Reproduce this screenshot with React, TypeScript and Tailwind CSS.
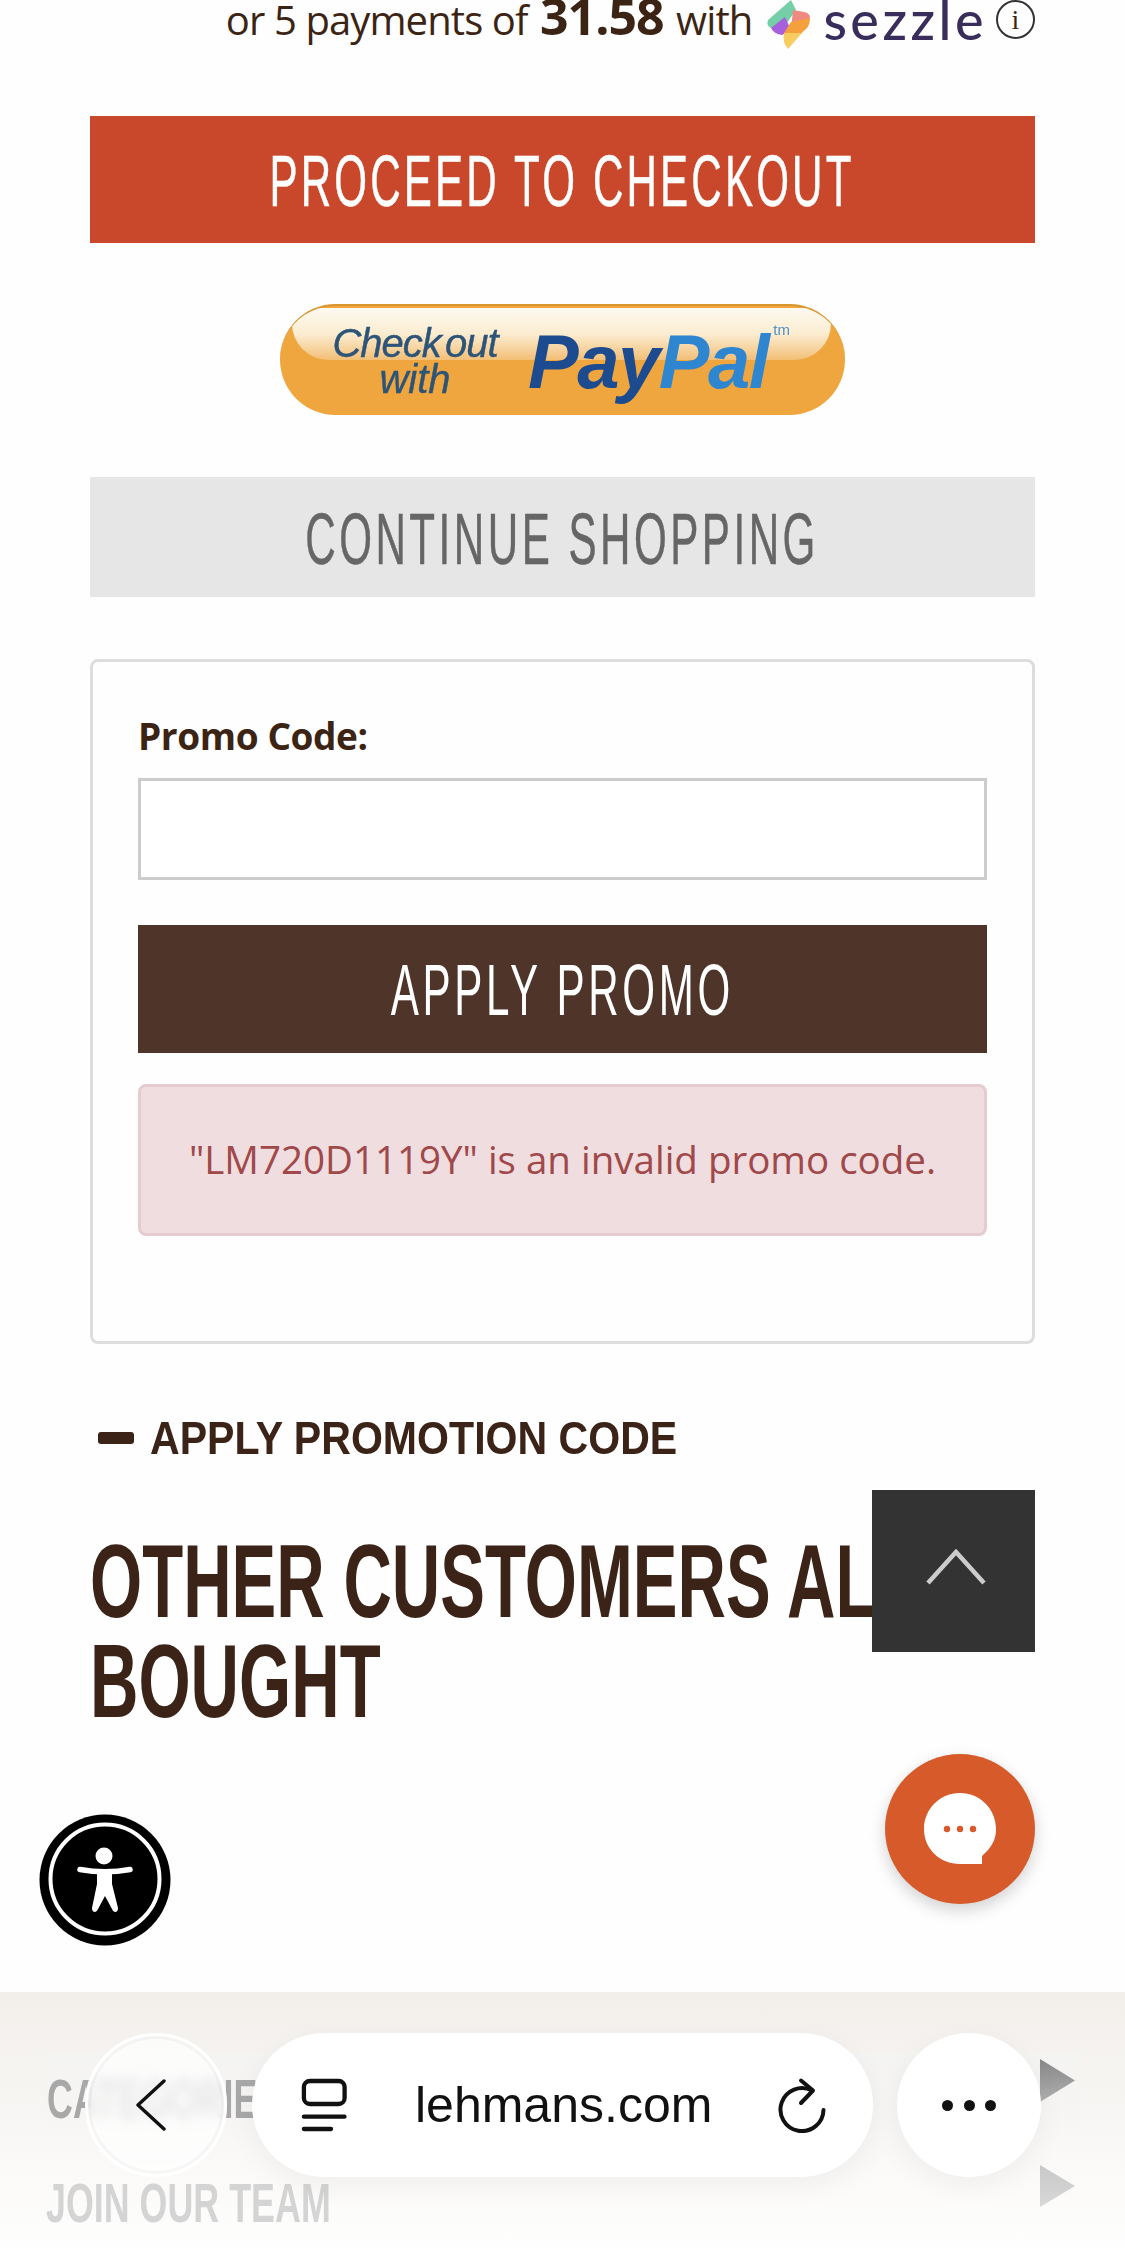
const narrow = "font-['Liberation_Sans',sans-serif]";
const body = "font-['Open_Sans','Noto_Sans',sans-serif]";

const SezzleMark = () => (
  <svg width="44" height="50" viewBox="0 0 44 50" className="shrink-0">
    <path d="M25 0 L2 20 Q0 26 5 28 L16 30 L30 10 Z" fill="#74cfa8" />
    <path d="M27 10 L38 12 Q44 13 44 18 L25 30 Z" fill="#ef8a80" />
    <path d="M5 28 L19 17 L25 30 L16 35 Q8 34 5 28 Z" fill="#a75fdc" />
    <path d="M44 18 Q44 24 41 28 L30 38 L18 33 L25 22 Z" fill="#f5a03c" />
    <path d="M18 33 L36 33 L22 49 Q16 42 18 33 Z" fill="#f8cd5f" />
  </svg>
);

const PayPalButton = () => (
  <div className="relative mx-auto mt-[61px] flex h-[111px] w-[565px] items-center overflow-hidden rounded-[56px] border-t-2 border-[#d9962f] bg-[#efa63f] pl-[50px] blur-[0.6px]">
    <div className="absolute left-[12px] right-[14px] top-[2px] h-[52px] rounded-b-[70px] rounded-t-[30px] bg-gradient-to-b from-[#fdf9f0] via-[#fbecd0] to-[#f3bf75]" />
    <div className="relative w-[170px] text-center font-['Liberation_Sans',sans-serif] text-[40px] italic leading-[36px] text-[#2c5478] [-webkit-text-stroke:0.4px_#2c5478]">
      <div className="tracking-[-1px] [word-spacing:-6px]">Check out</div>
      <div>with</div>
    </div>
    <div className="relative ml-[28px] mt-[2px] font-['Liberation_Sans',sans-serif] text-[76px] font-bold italic leading-none tracking-[-1.5px] text-[#1d4b8f]">
      Pay<span className="text-[#2f86d0]">Pal</span>
    </div>
    <span className="relative mb-[60px] ml-[5px] font-['Liberation_Sans',sans-serif] text-[15px] text-[#4f91c9]">tm</span>
  </div>
);

const Accessibility = () => (
  <svg width="132" height="132" viewBox="0 0 132 132">
    <circle cx="66" cy="66" r="65.5" fill="#000" />
    <circle cx="66" cy="65" r="54.5" fill="none" stroke="#fff" strokeWidth="4" />
    <circle cx="65" cy="42" r="8.5" fill="#fff" />
    <path d="M41 55.5 Q66 60 91 55.5" fill="none" stroke="#fff" strokeWidth="5.5" strokeLinecap="round" />
    <path d="M58 58 H73 V70 L79 94 Q79 98 76 98 Q74 98 73 95 L66 82 L59 95 Q58 98 56 98 Q53 98 53 94 L58 70 Z" fill="#fff" />
  </svg>
);

const ChatBubble = () => (
  <svg width="74" height="74" viewBox="0 0 74 74">
    <path d="M37 1 C57 1 73 17 73 37 C73 46 70 52 65 58 L59 64 L59 72 L37 72 C17 72 1 57 1 37 C1 17 17 1 37 1 Z" fill="#fff" />
    <circle cx="24" cy="37" r="3.2" fill="#d75a2b" />
    <circle cx="37" cy="37" r="3.2" fill="#d75a2b" />
    <circle cx="50" cy="37" r="3.2" fill="#d75a2b" />
  </svg>
);

const TabIcon = () => (
  <svg width="48" height="56" viewBox="0 0 48 56" fill="none" stroke="#111" strokeWidth="4.3" strokeLinecap="round" className="shrink-0">
    <rect x="3.9" y="4" width="40.7" height="23" rx="6" />
    <path d="M3.9 39.7 H44.5 M3.9 52 H31" />
  </svg>
);

const ReloadIcon = () => (
  <svg width="50" height="56" viewBox="0 0 50 56" fill="none" stroke="#111" strokeWidth="4" strokeLinecap="round" strokeLinejoin="round" className="shrink-0">
    <path d="M36 13.5 A21.5 21.5 0 1 0 47.5 33" />
    <path d="M25 3.5 L37 13.5 L25 26" />
  </svg>
);

export default function App() {
  return (
    <div className="relative h-[2261px] w-[1125px] overflow-hidden bg-[#fefefe]">
      <div className="px-[90px]">
        <div className="relative flex h-[55px] items-start justify-end text-[#3c2415]">
          <span className={`mt-[-8px] whitespace-nowrap text-[40px] leading-[48px] tracking-[-0.9px] ${body}`}>
            or 5 payments of <b className="mx-[3px] text-[50px] tracking-[-1px]">31.58</b> with
          </span>
          <span className="ml-[14px]"><SezzleMark /></span>
          <span className="ml-[13px] mt-[-8px] font-['Lato',sans-serif] text-[54px] font-medium leading-[56px] tracking-[3.5px] text-[#392d5c]">sezzle</span>
          <span className="ml-[9px] flex h-[39px] w-[39px] items-center justify-center rounded-full border-2 border-[#333] font-['Liberation_Serif',serif] text-[28px] leading-none">i</span>
        </div>

        <button className={`mt-[61px] flex h-[127px] w-full items-center justify-center bg-[#c9482b] pt-[3px] text-[72px] tracking-[5.4px] text-white ${narrow}`}>
          <span className="inline-block scale-x-[0.585] whitespace-nowrap [-webkit-text-stroke:0.5px_#fff]">PROCEED TO CHECKOUT</span>
        </button>

        <PayPalButton />

        <button className={`mt-[62px] flex h-[120px] w-full items-center justify-center bg-[#e6e6e6] pt-[3px] text-[72px] tracking-[6px] text-[#666] ${narrow}`}>
          <span className="inline-block scale-x-[0.585] whitespace-nowrap [-webkit-text-stroke:0.5px_#666]">CONTINUE SHOPPING</span>
        </button>

        <div className="mt-[62px] h-[685px] rounded-[8px] border-[3px] border-[#ddd] px-[45px] pt-[49px]">
          <label className={`block text-[37px] font-bold leading-[50px] tracking-[-0.4px] text-[#3c2415] ${body}`}>Promo Code:</label>
          <input className="mt-[17px] block h-[102px] w-full border-[3px] border-[#ccc] bg-white" />
          <button className={`mt-[45px] flex h-[128px] w-full items-center justify-center bg-[#4f342a] pt-[2px] text-[72px] tracking-[6.3px] text-white ${narrow}`}>
            <span className="inline-block scale-x-[0.585] whitespace-nowrap">APPLY PROMO</span>
          </button>
          <div className={`mt-[31px] flex h-[152px] items-center justify-center rounded-[8px] border-[3px] border-[#e6ccd0] bg-[#efdddf] text-[38.5px] text-[#a0484a] ${body}`}>
            "LM720D1119Y" is an invalid promo code.
          </div>
        </div>

        <div className="mt-[69px] flex items-center pl-[8px]">
          <span className="h-[12px] w-[36px] rounded-[3px] bg-[#3c2318]" />
          <span className={`ml-[16px] inline-block origin-left scale-x-[0.874] whitespace-nowrap text-[47px] font-bold leading-[50px] text-[#3c2318] ${narrow}`}>APPLY PROMOTION CODE</span>
        </div>

        <h2 className={`mt-[68px] origin-left scale-x-[0.645] whitespace-nowrap text-[104px] font-bold leading-[100px] text-[#3c2318] ${narrow}`}>
          OTHER CUSTOMERS ALSO<br />BOUGHT
        </h2>
      </div>

      {/* footer sits behind the browser bar */}
      <div className="absolute inset-x-0 bottom-0 h-[269px] bg-gradient-to-b from-[#f2efeb] to-white">
        <div className={`absolute left-[45px] right-[45px] top-[60px] h-[90px] rounded-[4px] bg-gradient-to-b from-[#f4f4f3] to-transparent pt-[5px] text-[56px] font-bold text-[#a8a8a8] ${narrow}`}>
          <span className="ml-[2px] inline-block origin-left scale-x-[0.64] whitespace-nowrap">CATEGORIES</span>
        </div>
        <div className={`absolute left-[46px] top-[169px] origin-left scale-x-[0.64] whitespace-nowrap text-[56px] font-bold text-[#d4d4d4] ${narrow}`}>JOIN OUR TEAM</div>
        <div className="absolute left-[1040px] top-[67px] h-[43px] w-[35px] bg-gradient-to-b from-[#888] to-[#b0b0b0] [clip-path:polygon(0_0,100%_50%,0_100%)]" />
        <div className="absolute left-[1040px] top-[173px] h-[42px] w-[35px] bg-gradient-to-b from-[#c8c8c8] to-[#d8d8d8] [clip-path:polygon(0_0,100%_50%,0_100%)]" />
      </div>

      {/* floating widgets */}
      <div className="absolute left-[872px] top-[1490px] flex h-[162px] w-[163px] items-center justify-center bg-[#333]">
        <svg width="60" height="36" viewBox="0 0 60 36" fill="none" stroke="#ccc" strokeWidth="4.5" className="mb-[8px] ml-[5px]"><path d="M2 34 L30 3 L58 34" /></svg>
      </div>
      <div className="absolute left-[885px] top-[1754px] flex h-[150px] w-[150px] items-center justify-center rounded-full bg-[#d75a2b] shadow-[0_6px_16px_rgba(0,0,0,0.18)]">
        <ChatBubble />
      </div>
      <div className="absolute left-[39px] top-[1814px]"><Accessibility /></div>

      {/* browser bar */}
      <div className="absolute left-[85px] top-[2033px] flex h-[144px] w-[142px] items-center justify-center rounded-full border-[3px] border-white bg-white/70 shadow-[inset_0_0_0_3px_rgba(0,0,0,0.03)] backdrop-blur-[6px]">
        <svg width="32" height="52" viewBox="0 0 32 52" fill="none" stroke="#111" strokeWidth="3.4" strokeLinecap="round" strokeLinejoin="round" className="mr-[10px]"><path d="M29 2 L3 26 L29 50" /></svg>
      </div>
      <div className="absolute left-[252px] top-[2033px] flex h-[144px] w-[621px] items-center rounded-[72px] bg-white pl-[48px] shadow-[0_8px_30px_rgba(0,0,0,0.05)]">
        <TabIcon />
        <span className="ml-[67px] font-['Liberation_Sans',sans-serif] text-[50px] text-[#111]">lehmans.com</span>
        <span className="ml-[64px]"><ReloadIcon /></span>
      </div>
      <div className="absolute left-[897px] top-[2033px] flex h-[144px] w-[144px] items-center justify-center gap-[10.5px] rounded-full bg-white shadow-[0_8px_30px_rgba(0,0,0,0.05)]">
        <span className="h-[11px] w-[11px] rounded-full bg-[#111]" />
        <span className="h-[11px] w-[11px] rounded-full bg-[#111]" />
        <span className="h-[11px] w-[11px] rounded-full bg-[#111]" />
      </div>
    </div>
  );
}
